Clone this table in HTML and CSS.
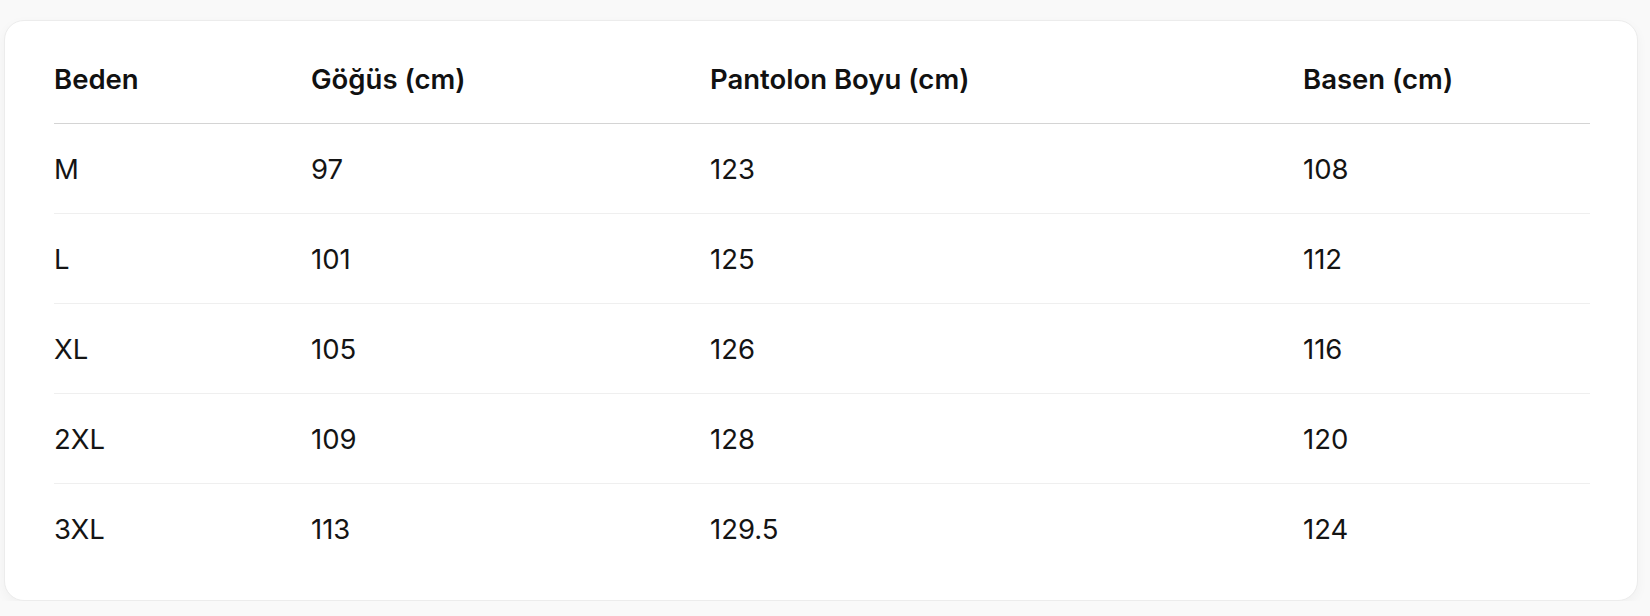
FILE: index.html
```html
<!DOCTYPE html>
<html lang="tr">
<head>
<meta charset="utf-8">
<title>Beden Tablosu</title>
<link rel="stylesheet" href="styles.css">
</head>
<body>
<div class="card">
  <div class="table">
    <div class="row head">
      <div class="cell">Beden</div>
      <div class="cell">Göğüs (cm)</div>
      <div class="cell">Pantolon Boyu (cm)</div>
      <div class="cell">Basen (cm)</div>
    </div>
    <div class="row">
      <div class="cell">M</div>
      <div class="cell">97</div>
      <div class="cell">123</div>
      <div class="cell">108</div>
    </div>
    <div class="row">
      <div class="cell">L</div>
      <div class="cell">101</div>
      <div class="cell">125</div>
      <div class="cell">112</div>
    </div>
    <div class="row">
      <div class="cell">XL</div>
      <div class="cell">105</div>
      <div class="cell">126</div>
      <div class="cell">116</div>
    </div>
    <div class="row">
      <div class="cell">2XL</div>
      <div class="cell">109</div>
      <div class="cell">128</div>
      <div class="cell">120</div>
    </div>
    <div class="row last">
      <div class="cell">3XL</div>
      <div class="cell">113</div>
      <div class="cell">129.5</div>
      <div class="cell">124</div>
    </div>
  </div>
</div>
</body>
</html>
```

FILE: styles.css
```css
html, body {
  margin: 0;
  padding: 0;
}
body {
  background: #f9f9f9;
  font-family: Inter, "Liberation Sans", sans-serif;
  color: #141414;
  padding: 20px 12px 0 4px;
}
.card {
  background: #ffffff;
  border: 1px solid #ececec;
  border-radius: 20px;
  box-shadow: 0 4px 12px rgba(0, 0, 0, 0.04);
  padding: 14px 47px 27px 49px;
}
.table {
  display: flex;
  flex-direction: column;
}
.row {
  display: grid;
  grid-template-columns: 257px 399px 593px 287px;
  height: 89px;
  align-items: center;
  border-bottom: 1px solid #efefef;
  font-size: 27.5px;
  font-weight: 400;
}
.row.head {
  height: 88px;
  border-bottom: 1px solid #d4d4d4;
  font-weight: 600;
  color: #111111;
}
.row.last {
  border-bottom: none;
}
.cell {
  white-space: nowrap;
}
```
